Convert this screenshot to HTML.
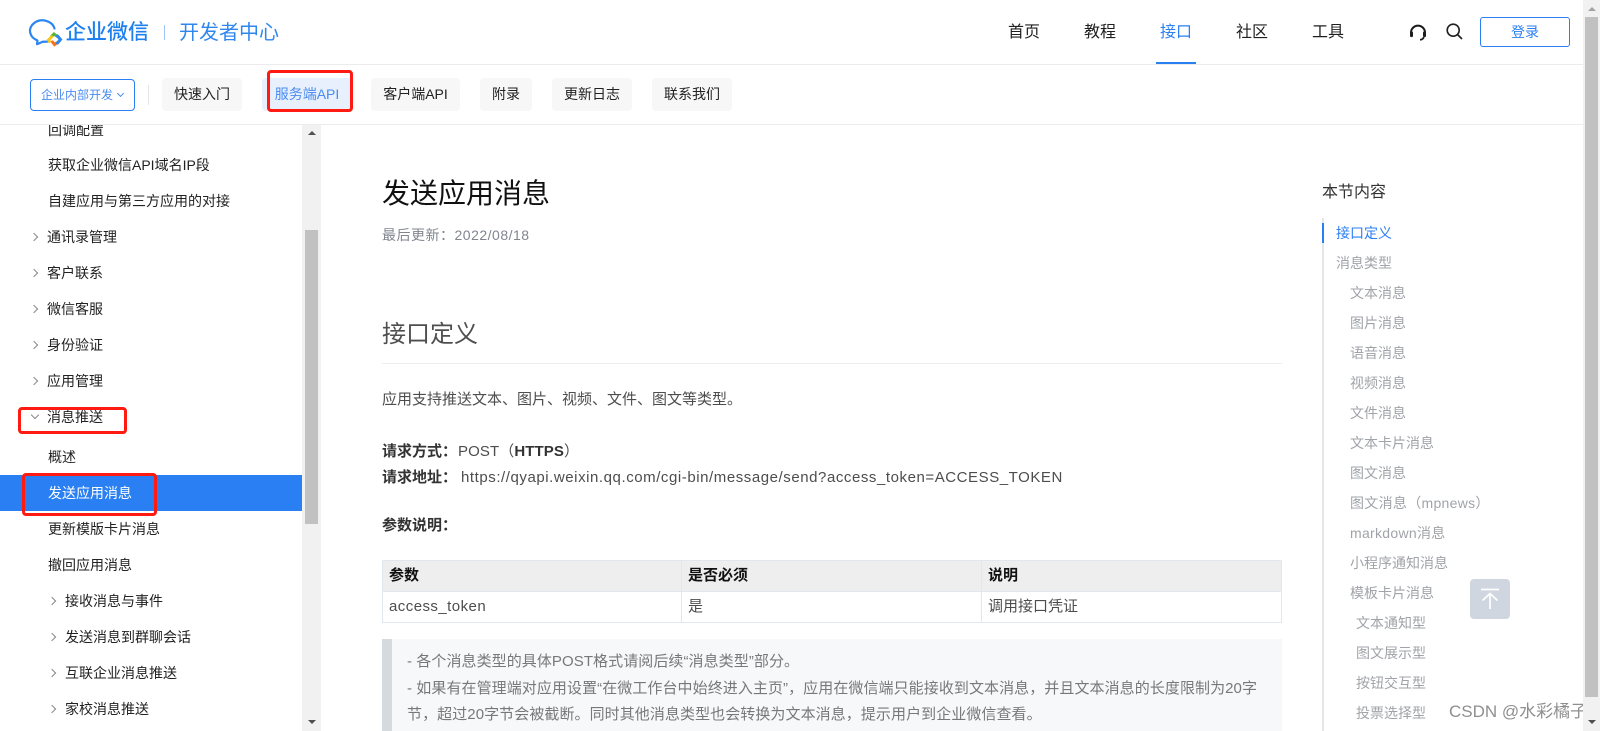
<!DOCTYPE html>
<html lang="zh-CN"><head><meta charset="utf-8"><title>发送应用消息</title>
<style>
html,body{margin:0;padding:0;width:1600px;height:731px;overflow:hidden;background:#fff}
body{position:relative;font-family:"Liberation Sans","Noto Sans CJK SC",sans-serif;font-size:14px;color:#222}
.a{position:absolute}
.t{position:absolute;white-space:nowrap;line-height:20px;height:20px}
.top{position:absolute;left:0;top:0;width:1583px;height:124px;background:#fff;z-index:5;border-bottom:1px solid #ececec}
.hl{position:absolute;left:0;top:64px;width:1583px;height:1px;background:#ececec}
.nav{font-size:16px;color:#1f1f1f;top:23px}
.btn{position:absolute;top:78px;height:33px;line-height:33px;background:#f7f7f7;border-radius:4px;text-align:center;font-size:14px;color:#222}
.s{font-size:14px;color:#222}
.c{position:absolute;width:5px;height:5px;border-top:1.4px solid #8a8a8a;border-right:1.4px solid #8a8a8a;transform:rotate(45deg)}
.b{font-size:15px;color:#4d4d4d}
.n{font-weight:700;color:#333}
.toc{font-size:14px;color:#a0a3a8}
.th{font-size:15px;font-weight:700;color:#111}
.q{font-size:15px;color:#787878;letter-spacing:.07px}
.red{position:absolute;border:3px solid #ff1a12;border-radius:4px;box-sizing:border-box;z-index:8}
.tu{width:0;height:0;border-left:5px solid transparent;border-right:5px solid transparent;position:absolute}
</style></head><body>

<!-- sidebar -->
<div class="a" style="left:0;top:475px;width:302px;height:36px;background:#2a7ff3"></div>
<div class="t s" style="left:48px;top:120px">回调配置</div>
<div class="t s" style="left:48px;top:155px">获取企业微信API域名IP段</div>
<div class="t s" style="left:48px;top:191px">自建应用与第三方应用的对接</div>
<div class="c" style="left:31px;top:234px"></div><div class="t s" style="left:47px;top:227px">通讯录管理</div>
<div class="c" style="left:31px;top:270px"></div><div class="t s" style="left:47px;top:263px">客户联系</div>
<div class="c" style="left:31px;top:306px"></div><div class="t s" style="left:47px;top:299px">微信客服</div>
<div class="c" style="left:31px;top:342px"></div><div class="t s" style="left:47px;top:335px">身份验证</div>
<div class="c" style="left:31px;top:378px"></div><div class="t s" style="left:47px;top:371px">应用管理</div>
<div class="c" style="left:32px;top:412px;transform:rotate(135deg)"></div><div class="t s" style="left:47px;top:407px">消息推送</div>
<div class="t s" style="left:48px;top:447px">概述</div>
<div class="t s" style="left:48px;top:483px;color:#fff">发送应用消息</div>
<div class="t s" style="left:48px;top:519px">更新模版卡片消息</div>
<div class="t s" style="left:48px;top:555px">撤回应用消息</div>
<div class="c" style="left:49px;top:598px"></div><div class="t s" style="left:65px;top:591px">接收消息与事件</div>
<div class="c" style="left:49px;top:634px"></div><div class="t s" style="left:65px;top:627px">发送消息到群聊会话</div>
<div class="c" style="left:49px;top:670px"></div><div class="t s" style="left:65px;top:663px">互联企业消息推送</div>
<div class="c" style="left:49px;top:706px"></div><div class="t s" style="left:65px;top:699px">家校消息推送</div>
<div class="red" style="left:18px;top:407px;width:109px;height:27px"></div>
<div class="red" style="left:22px;top:473px;width:135px;height:43px"></div>

<!-- sidebar scrollbar -->
<div class="a" style="left:302px;top:124px;width:18px;height:607px;background:#f1f1f1"></div>
<div class="a" style="left:305px;top:230px;width:13px;height:294px;background:#c1c1c1"></div>
<div class="tu" style="left:308px;top:131px;border-left-width:4px;border-right-width:4px;border-bottom:4px solid #505050"></div>
<div class="tu" style="left:308px;top:720px;border-left-width:4px;border-right-width:4px;border-top:4px solid #505050"></div>
<div class="a" style="left:320px;top:124px;width:1px;height:607px;background:#f2f2f2"></div>

<!-- header -->
<div class="top">
  <div class="hl"></div>
  <svg class="a" style="left:0;top:0" width="80" height="60" viewBox="0 0 80 60">
    <path d="M54.5 28.5A12.4 10.5 0 1 0 37.5 40.5L37 44.2L43 41.6Q46 42 48.5 41.3" fill="none" stroke="#2a86f0" stroke-width="2.2" stroke-linejoin="round" stroke-linecap="round"/>
    <path d="M51.5 36.5L54 34L56.5 36" fill="none" stroke="#5cb531" stroke-width="3" stroke-linecap="round"/>
    <path d="M49.5 41.5L48.5 40L51.5 37" fill="none" stroke="#f7c51e" stroke-width="3" stroke-linecap="round"/>
    <path d="M52.5 42L54.5 44.5L56.5 43" fill="none" stroke="#f5701f" stroke-width="3" stroke-linecap="round"/>
    <path d="M57.5 36L60.5 39.5L57.5 43" fill="none" stroke="#2a86f0" stroke-width="3" stroke-linecap="round"/>
  </svg>
  <div class="t" style="left:65px;top:19px;height:28px;line-height:28px;font-size:21px;color:#1d80ee;font-weight:500">企业微信</div>
  <div class="a" style="left:164px;top:25px;width:1px;height:15px;background:#9cc6f5"></div>
  <div class="t" style="left:179px;top:18px;height:30px;line-height:30px;font-size:20px;color:#2f87ee">开发者中心</div>

  <div class="t nav" style="left:1008px">首页</div>
  <div class="t nav" style="left:1084px">教程</div>
  <div class="t nav" style="left:1160px;color:#2a7ff3">接口</div>
  <div class="t nav" style="left:1236px">社区</div>
  <div class="t nav" style="left:1312px">工具</div>
  <div class="a" style="left:1156px;top:62px;width:40px;height:2px;background:#2a7ff3"></div>

  <svg class="a" style="left:1408px;top:23px" width="20" height="20" viewBox="0 0 20 20">
    <path d="M4.2 13.5A7 7 0 1 1 15.8 13.5" fill="none" stroke="#1c1c1c" stroke-width="2"/>
    <rect x="2" y="8.5" width="3" height="5.6" rx="1.2" fill="#1c1c1c"/><rect x="15" y="8.5" width="3" height="5.6" rx="1.2" fill="#1c1c1c"/>
    <path d="M15.8 14q-.6 2.6-3.8 2.8" fill="none" stroke="#1c1c1c" stroke-width="1.7"/>
  </svg>
  <svg class="a" style="left:1445px;top:22px" width="19" height="19" viewBox="0 0 19 19">
    <circle cx="8.2" cy="8.2" r="6" fill="none" stroke="#222" stroke-width="1.6"/><path d="M12.6 12.6L16.5 16.5" stroke="#222" stroke-width="1.7" stroke-linecap="round"/>
  </svg>
  <div class="a" style="left:1480px;top:17px;width:88px;height:28px;border:1px solid #2a7ff3;border-radius:3px;text-align:center;line-height:28px;color:#2a7ff3;font-size:14px">登录</div>

  <div class="a" style="left:30px;top:79px;width:103px;height:30px;border:1px solid #2a7ff3;border-radius:4px;line-height:30px;color:#4a8cf0;font-size:12px;text-indent:10px">企业内部开发</div>
  <div class="a" style="left:118px;top:91px;width:4px;height:4px;border-right:1.2px solid #4a8cf0;border-bottom:1.2px solid #4a8cf0;transform:rotate(45deg)"></div>
  <div class="a" style="left:148px;top:85px;width:1px;height:20px;background:#e5e5e5"></div>
  <div class="btn" style="left:162px;width:80px">快速入门</div>
  <div class="btn" style="left:262px;width:90px;background:#e8f0fd;color:#4a8cf0">服务端API</div>
  <div class="btn" style="left:371px;width:89px">客户端API</div>
  <div class="btn" style="left:480px;width:52px">附录</div>
  <div class="btn" style="left:552px;width:80px">更新日志</div>
  <div class="btn" style="left:652px;width:80px">联系我们</div>
  <div class="red" style="left:267px;top:70px;width:86px;height:42px"></div>
</div>

<!-- main -->
<div class="t" style="left:382px;top:174px;height:40px;line-height:40px;font-size:28px;color:#111">发送应用消息</div>
<div class="t" style="left:382px;top:225px;color:#80858f;font-size:14px;letter-spacing:.5px">最后更新：2022/08/18</div>
<div class="t" style="left:382px;top:315px;height:40px;line-height:40px;font-size:24px;color:#4f4f4f">接口定义</div>
<div class="a" style="left:382px;top:363px;width:900px;height:1px;background:#eeeeee"></div>
<div class="t b" style="left:382px;top:390px">应用支持推送文本、图片、视频、文件、图文等类型。</div>
<div class="t b" style="left:382px;top:442px"><span class="n">请求方式：</span></div>
<div class="t b" style="left:458px;top:442px;letter-spacing:.1px">POST（<span class="n">HTTPS</span>）</div>
<div class="t b" style="left:382px;top:468px"><span class="n">请求地址：</span></div>
<div class="t b" style="left:461px;top:468px;letter-spacing:.56px">https://qyapi.weixin.qq.com/cgi-bin/message/send?access_token=ACCESS_TOKEN</div>
<div class="t b" style="left:382px;top:516px"><span class="n">参数说明：</span></div>

<!-- table -->
<div class="a" style="left:382px;top:560px;width:898px;height:61px;border:1px solid #e2e6ed"></div>
<div class="a" style="left:383px;top:561px;width:898px;height:30px;background:#eeeeee"></div>
<div class="a" style="left:383px;top:591px;width:898px;height:1px;background:#e2e6ed"></div>
<div class="a" style="left:681px;top:561px;width:1px;height:61px;background:#e2e6ed"></div>
<div class="a" style="left:981px;top:561px;width:1px;height:61px;background:#e2e6ed"></div>
<div class="t th" style="left:389px;top:566px">参数</div>
<div class="t th" style="left:688px;top:566px">是否必须</div>
<div class="t th" style="left:988px;top:566px">说明</div>
<div class="t b" style="left:389px;top:597px;letter-spacing:.45px">access_token</div>
<div class="t b" style="left:688px;top:597px">是</div>
<div class="t b" style="left:988px;top:597px">调用接口凭证</div>

<!-- quote -->
<div class="a" style="left:382px;top:639px;width:900px;height:92px;background:#f7f8fa"></div>
<div class="a" style="left:382px;top:639px;width:10px;height:92px;background:#d5dade"></div>
<div class="t q" style="left:407px;top:652px">- 各个消息类型的具体POST格式请阅后续“消息类型”部分。</div>
<div class="t q" style="left:407px;top:679px">- 如果有在管理端对应用设置“在微工作台中始终进入主页”，应用在微信端只能接收到文本消息，并且文本消息的长度限制为20字</div>
<div class="t q" style="left:407px;top:705px">节，超过20字节会被截断。同时其他消息类型也会转换为文本消息，提示用户到企业微信查看。</div>

<!-- toc -->
<div class="t" style="left:1322px;top:183px;font-size:16px;color:#333">本节内容</div>
<div class="a" style="left:1322px;top:218px;width:2px;height:513px;background:#e6e6e6"></div>
<div class="a" style="left:1322px;top:223px;width:2px;height:20px;background:#2a7ff3"></div>
<div class="t toc" style="left:1336px;top:223px;color:#2a7ff3">接口定义</div>
<div class="t toc" style="left:1336px;top:253px">消息类型</div>
<div class="t toc" style="left:1350px;top:283px">文本消息</div>
<div class="t toc" style="left:1350px;top:313px">图片消息</div>
<div class="t toc" style="left:1350px;top:343px">语音消息</div>
<div class="t toc" style="left:1350px;top:373px">视频消息</div>
<div class="t toc" style="left:1350px;top:403px">文件消息</div>
<div class="t toc" style="left:1350px;top:433px">文本卡片消息</div>
<div class="t toc" style="left:1350px;top:463px">图文消息</div>
<div class="t toc" style="left:1350px;top:493px;letter-spacing:.3px">图文消息（mpnews）</div>
<div class="t toc" style="left:1350px;top:523px;letter-spacing:.3px">markdown消息</div>
<div class="t toc" style="left:1350px;top:553px">小程序通知消息</div>
<div class="t toc" style="left:1350px;top:583px">模板卡片消息</div>
<div class="t toc" style="left:1356px;top:613px">文本通知型</div>
<div class="t toc" style="left:1356px;top:643px">图文展示型</div>
<div class="t toc" style="left:1356px;top:673px">按钮交互型</div>
<div class="t toc" style="left:1356px;top:703px">投票选择型</div>

<!-- back to top -->
<div class="a" style="left:1470px;top:579px;width:40px;height:40px;background:#d0d6e0;border-radius:4px;z-index:6">
  <svg width="40" height="40" viewBox="0 0 40 40"><path d="M11 10.5H29M20 30V15M12.5 21.5L20 14.5L27.5 21.5" fill="none" stroke="#fff" stroke-width="1.7"/></svg>
</div>

<!-- watermark -->
<div class="t" style="left:1449px;top:700px;height:24px;line-height:24px;font-size:17px;color:#8f8f8f;z-index:7">CSDN @水彩橘子</div>

<!-- page scrollbar -->
<div class="a" style="left:1583px;top:0;width:17px;height:731px;background:#f1f1f1;z-index:9"></div>
<div class="a" style="left:1585px;top:17px;width:13px;height:680px;background:#c1c1c1;z-index:10"></div>
<div class="tu" style="left:1588px;top:7px;border-left-width:4px;border-right-width:4px;border-bottom:4px solid #a3a3a3;z-index:10"></div>
<div class="tu" style="left:1588px;top:720px;border-left-width:4px;border-right-width:4px;border-top:4px solid #505050;z-index:10"></div>
</body></html>
